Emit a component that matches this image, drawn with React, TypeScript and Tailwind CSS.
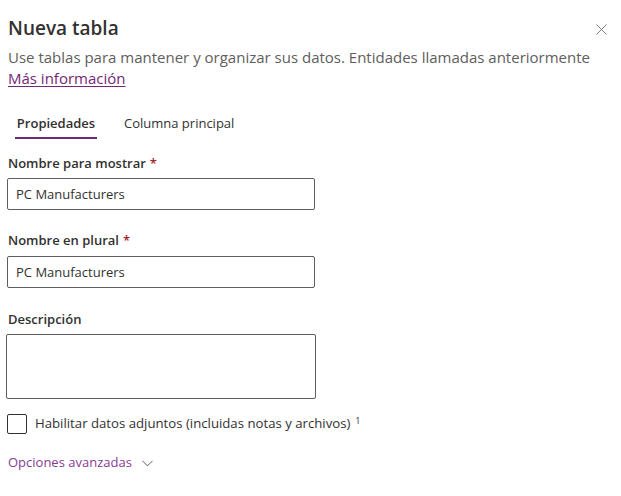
import { X, ChevronDown } from "lucide-react";

const inputCls =
  "block h-[32px] w-[308px] rounded-[2px] border border-[#605e5c] bg-white px-[8px] text-[13px] text-[#323130] outline-none";

function Label({ text, required }: { text: string; required?: boolean }) {
  return (
    <div className="h-[20px] text-[13px] leading-[20px] font-semibold text-[#323130]">
      {text}
      {required && <span className="ml-[4px] text-[#a4262c]">*</span>}
    </div>
  );
}

export default function App() {
  return (
    <div className="relative h-[496px] w-[621px] overflow-hidden bg-white px-[8px] font-['Open_Sans',sans-serif] text-[#323130]">
      {/* Header */}
      <div className="flex items-start justify-between pt-[14px]">
        <h1 className="h-[28px] text-[19px] leading-[28px] font-semibold text-[#323130]">Nueva tabla</h1>
        <button className="mt-[6px] mr-[2px] text-[#605e5c]">
          <X size={19} strokeWidth={1} />
        </button>
      </div>
      <p className="mt-[5px] text-[15px] leading-[21px] text-[#605e5c]">
        Use tablas para mantener y organizar sus datos. Entidades llamadas anteriormente
        <br />
        <a className="text-[#742774] underline underline-offset-2" href="#">
          Más información
        </a>
      </p>

      {/* Tabs */}
      <div className="mt-[22px] flex items-stretch pl-[7px]">
        <div className="flex h-[28px] w-[82px] items-center justify-center border-b-2 border-[#742774] text-[13px] font-semibold text-[#323130]">
          Propiedades
        </div>
        <div className="ml-[27px] flex h-[28px] items-center pb-[2px] text-[13px] text-[#323130]">
          Columna principal
        </div>
      </div>

      {/* Form */}
      <div className="mt-[14px]">
        <Label text="Nombre para mostrar" required />
        <input className={`${inputCls} mt-[5px] -ml-[1px]`} defaultValue="PC Manufacturers" />

        <div className="mt-[20px]">
          <Label text="Nombre en plural" required />
        </div>
        <input className={`${inputCls} mt-[6px] -ml-[1px]`} defaultValue="PC Manufacturers" />

        <div className="mt-[21px]">
          <Label text="Descripción" />
        </div>
        <textarea className="mt-[5px] -ml-[2px] block h-[65px] w-[310px] resize-none rounded-[2px] border border-[#605e5c] bg-white outline-none" />

        <label className="mt-[15px] -ml-[1px] flex h-[20px] items-center">
          <span className="h-[20px] w-[20px] rounded-[2px] border border-[#323130] bg-white" />
          <span className="ml-[8px] text-[13.2px] text-[#323130]">
            Habilitar datos adjuntos (incluidas notas y archivos)
            <sup className="ml-[5px] text-[9px]">1</sup>
          </span>
        </label>

        <div className="mt-[19px] flex h-[20px] items-center text-[13px] text-[#8a3a94]">
          Opciones avanzadas
          <ChevronDown size={19} strokeWidth={1} className="ml-[6px] text-[#323130]" />
        </div>
      </div>
    </div>
  );
}
